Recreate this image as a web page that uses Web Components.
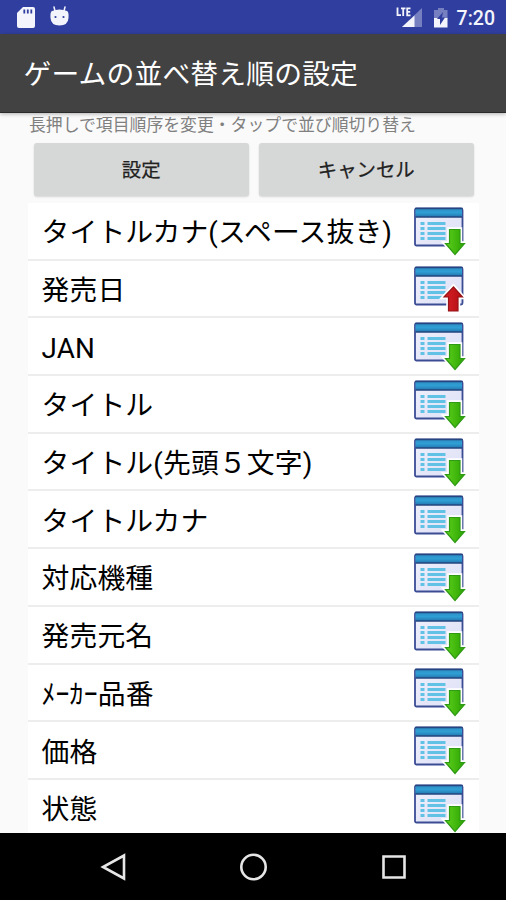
<!DOCTYPE html>
<html lang="ja">
<head>
<meta charset="utf-8">
<title>ゲームの並べ替え順の設定</title>
<style>
  body {
    margin: 0;
    background: #fafafa;
    font-family: Roboto, "Noto Sans CJK JP", sans-serif;
  }
</style>
</head>
<body>
<sort-screen></sort-screen>
<script>
class StatusBar extends HTMLElement {
  constructor() {
    super()
    this.attachShadow({mode: 'open'})
    this.shadowRoot.innerHTML = /*html*/ `
      <style>
        :host {
          display: flex;
          justify-content: space-between;
          align-items: center;
          box-sizing: border-box;
          height: 34px;
          padding: 0 11px 0 16px;
          background: #303f9f;
          color: #f4f5fc;
        }
        div { display: flex; align-items: center; height: 34px }
        svg { display: block }
        .time { margin-left: 9px; font-size: 19.5px; font-weight: 500; line-height: 34px; padding-top: 3px }
      </style>
      <div>
        <svg width="56" height="34" viewBox="0 0 56 34">
          <path fill="#f4f5fc" d="M7 7h10q2 0 2 2v17q0 2-2 2H3q-2 0-2-2V13z"/>
          <path stroke="#303f9f" stroke-width="1.8" d="M8.3 9.5v4M11.8 9.5v4M15.3 9.5v4"/>
          <path fill="#f4f5fc" d="M36 11q7.500-3 15 0 2 1 1.500 7-.5 7.500-9 7.500t-9-7.500q-.5-6 1.500-7z"/>
          <path stroke="#f4f5fc" stroke-width="1.500" stroke-linecap="round" d="M39 11 38 7M48 11l1-4"/>
          <circle cx="39.500" cy="17" r="1.100" fill="#303f9f"/>
          <circle cx="47.500" cy="17" r="1.100" fill="#303f9f"/>
        </svg>
      </div>
      <div>
        <svg width="52" height="34" viewBox="0 0 52 34">
          <path fill="#7680c0" d="M26 8v19H6z"/>
          <path fill="#f4f5fc" d="M18.500 15.500V27H6z"/>
          <path stroke="#303f9f" stroke-width="3" d="M0 17h15"/>
          <path fill="none" stroke="#f4f5fc" stroke-width="1.800" d="M1.500 7.500v7.700H5M5 8.300h4.500M7.200 8v8M14.500 8.300h-3.300v7h3.300M11.200 11.800h3"/>
          <path fill="#7680c0" d="M42 8h6v2h3.500v9H38v-9h4z"/>
          <path fill="#f4f5fc" d="M38 18h13.500v9.500H38z"/>
          <path fill="#303f9f" d="m47 12-6 7h3v6l5-7.500h-3z"/>
        </svg>
        <span class="time">7:20</span>
      </div>
    `
  }
}

class TitleBar extends HTMLElement {
  constructor() {
    super()
    this.attachShadow({mode: 'open'})
    this.shadowRoot.innerHTML = /*html*/ `
      <style>
        :host {
          display: flex;
          align-items: center;
          box-sizing: border-box;
          height: 79px;
          padding: 4px 0 0 23.5px;
          background: #424242;
          border-bottom: 1px solid #2b2b2b;
          box-shadow: 0 1px 4px rgba(0, 0, 0, 0.3);
          color: #fff;
          font-size: 27.8px;
          letter-spacing: 0.15px;
          line-height: 40px;
          white-space: nowrap;
        }
      </style>
      <slot></slot>
    `
  }
}

class FlatButton extends HTMLElement {
  constructor() {
    super()
    this.attachShadow({mode: 'open'})
    this.shadowRoot.innerHTML = /*html*/ `
      <style>
        :host { display: block; flex: 1 }
        button {
          display: block;
          width: 100%;
          height: 53px;
          padding: 3px 0 0;
          border: 0;
          border-radius: 3px;
          background: #d6d7d7;
          box-shadow: 0 1px 2px rgba(0, 0, 0, 0.15);
          color: #222;
          font: 400 19.4px/28px Roboto, "Noto Sans CJK JP", sans-serif;
          -webkit-text-stroke: 0.25px #222;
        }
      </style>
      <button><slot></slot></button>
    `
  }
}

class SortIcon extends HTMLElement {
  constructor() {
    super()
    this.attachShadow({mode: 'open'})
  }

  connectedCallback() {
    const up = this.getAttribute('order') === 'desc'
    const arrow = up
      ? '<path d="M39.500 20.800 48.500 31H44v14H34.500V31H30z" fill="#fff" stroke="#fff" stroke-width="4.500"/><path d="M39.500 20.800 48.500 31H44v14H34.500V31H30z" fill="url(#r)" stroke="#951318" stroke-width="1.200"/>'
      : '<path d="M35.500 22.500h10.500V36.500h4.500L41 47.500 31.500 36.500h4z" fill="#fff" stroke="#fff" stroke-width="4.500"/><path d="M35.500 22.500h10.500V36.500h4.500L41 47.500 31.500 36.500h4z" fill="url(#g)" stroke="#2f9a14" stroke-width="1.200"/>'
    this.shadowRoot.innerHTML = /*html*/ `
      <style>
        :host { display: block; padding-top: 2px }
        :host([order="desc"]) { padding-top: 5px }
        svg { display: block }
      </style>
      <svg width="53" height="50" viewBox="0 0 53 50">
        <defs>
          <linearGradient id="b" x2="0" y2="1">
            <stop stop-color="#2e8fc4"/><stop offset=".5" stop-color="#2f9fd4"/><stop offset="1" stop-color="#2474ae"/>
          </linearGradient>
          <linearGradient id="g"><stop stop-color="#5ed01c"/><stop offset="1" stop-color="#2ba402"/></linearGradient>
          <linearGradient id="r"><stop stop-color="#d82226"/><stop offset="1" stop-color="#b30d13"/></linearGradient>
          <linearGradient id="w" x2="1" y2="1"><stop stop-color="#f0f1fd"/><stop offset="1" stop-color="#dcdff5"/></linearGradient>
        </defs>
        <rect x="1" y="1.500" width="47.500" height="37" rx="1.500" fill="url(#w)" stroke="#3b4c94" stroke-width="1.800"/>
        <path fill="url(#b)" d="M1.500 1.500h46.500V10H1.500z"/>
        <path stroke="#24457f" stroke-width="1.500" d="M1 1.600h47.500M1.500 10h46.500"/>
        <path stroke="#62c2e6" stroke-width="2.800" d="M6.500 16.500h4M6.500 21.500h4M6.500 26.500h4M6.500 31.500h4M13.500 16.500h18M13.500 21.500h18M13.500 26.500h18M13.500 31.500h18"/>
        ${arrow}
      </svg>
    `
  }
}

class SortRow extends HTMLElement {
  constructor() {
    super()
    this.attachShadow({mode: 'open'})
  }

  connectedCallback() {
    this.shadowRoot.innerHTML = /*html*/ `
      <style>
        :host {
          display: flex;
          justify-content: space-between;
          align-items: center;
          box-sizing: border-box;
          height: 57.7px;
          padding: 0 12px 0 13.5px;
          background: #fff;
          border-bottom: 2px solid #ededed;
          color: #000;
          font-size: 27.8px;
          letter-spacing: 0.15px;
          line-height: 40px;
          white-space: nowrap;
        }
        :host(:last-of-type) { border-bottom-color: #fff }
        span { padding-top: 5px }
      </style>
      <span><slot></slot></span>
      <sort-icon order="${this.getAttribute('order') || 'asc'}"></sort-icon>
    `
  }
}

class NavBar extends HTMLElement {
  constructor() {
    super()
    this.attachShadow({mode: 'open'})
    this.shadowRoot.innerHTML = /*html*/ `
      <style>
        :host {
          display: flex;
          justify-content: center;
          align-items: center;
          gap: 112px;
          height: 67px;
          background: #000;
        }
        svg { display: block; fill: none; stroke: #e6e6e6; stroke-width: 2.6 }
      </style>
      <svg width="28" height="28" viewBox="0 0 28 28"><path d="M25 2.500v23L4 14z"/></svg>
      <svg width="28" height="28" viewBox="0 0 28 28"><circle cx="14.500" cy="14" r="12.200"/></svg>
      <svg width="28" height="28" viewBox="0 0 28 28"><path d="M4.500 3.500h21v21h-21z"/></svg>
    `
  }
}

class SortScreen extends HTMLElement {
  constructor() {
    super()
    this.attachShadow({mode: 'open'})
    this.shadowRoot.innerHTML = /*html*/ `
      <style>
        :host {
          display: flex;
          flex-direction: column;
          height: 900px;
          overflow: hidden;
        }
        main {
          flex: 1;
          min-height: 0;
          padding: 0 27px 0 28px;
          overflow: hidden;
        }
        title-bar { position: relative }
        p {
          margin: 0 0 0 1px;
          color: #808080;
          font-size: 16.85px;
          line-height: 24px;
          height: 30px;
          white-space: nowrap;
        }
        .buttons {
          display: flex;
          gap: 10.5px;
          padding: 0 5.5px 0 6px;
          height: 60px;
        }
      </style>
      <status-bar></status-bar>
      <title-bar>ゲームの並べ替え順の設定</title-bar>
      <main>
        <p>長押しで項目順序を変更・タップで並び順切り替え</p>
        <div class="buttons">
          <flat-button>設定</flat-button>
          <flat-button>キャンセル</flat-button>
        </div>
        <section>
          <sort-row>タイトルカナ(スペース抜き)</sort-row>
          <sort-row order="desc">発売日</sort-row>
          <sort-row>JAN</sort-row>
          <sort-row>タイトル</sort-row>
          <sort-row>タイトル(先頭５文字)</sort-row>
          <sort-row>タイトルカナ</sort-row>
          <sort-row>対応機種</sort-row>
          <sort-row>発売元名</sort-row>
          <sort-row>ﾒｰｶｰ品番</sort-row>
          <sort-row>価格</sort-row>
          <sort-row>状態</sort-row>
        </section>
      </main>
      <nav-bar></nav-bar>
    `
  }
}

customElements.define('status-bar', StatusBar)
customElements.define('title-bar', TitleBar)
customElements.define('flat-button', FlatButton)
customElements.define('sort-icon', SortIcon)
customElements.define('sort-row', SortRow)
customElements.define('nav-bar', NavBar)
customElements.define('sort-screen', SortScreen)
</script>
</body>
</html>
